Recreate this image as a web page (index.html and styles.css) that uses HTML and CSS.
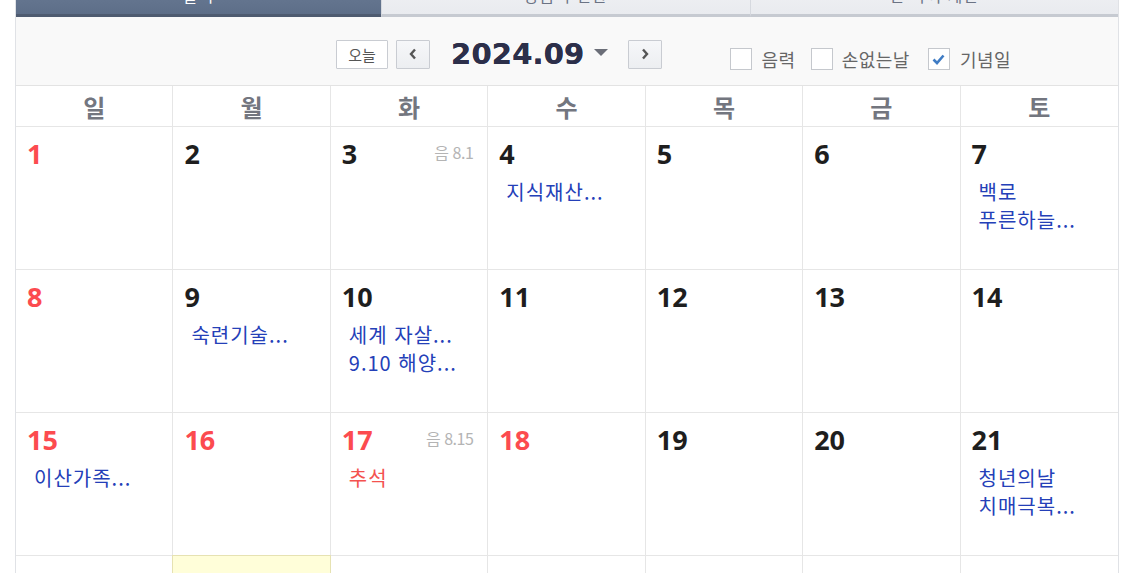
FILE: index.html
```html
<!DOCTYPE html>
<html lang="ko">
<head>
<meta charset="utf-8">
<title>달력</title>
<link rel="stylesheet" href="styles.css">
</head>
<body>
<div class="wrap">
  <div class="tabs">
    <div class="tab active">달력</div>
    <div class="tab">양음력 변환</div>
    <div class="tab">만 나이 계산</div>
  </div>
  <div class="toolbar">
    <div class="nav">
      <button class="btn today">오늘</button>
      <button class="btn arrow"><svg width="8" height="12" viewBox="0 0 8 12"><path d="M6 1.5 L2 6 L6 10.5" fill="none" stroke="#555" stroke-width="2.4"/></svg></button>
      <div class="title">2024.09</div>
      <span class="caret"></span>
      <button class="btn arrow"><svg width="8" height="12" viewBox="0 0 8 12"><path d="M2 1.5 L6 6 L2 10.5" fill="none" stroke="#555" stroke-width="2.4"/></svg></button>
    </div>
    <div class="opts">
      <label class="opt"><span class="box"></span>음력</label>
      <label class="opt"><span class="box"></span>손없는날</label>
      <label class="opt"><span class="box checked"><svg width="13" height="11" viewBox="0 0 13 11"><path d="M1.5 5.5 L5 9 L11.5 1.5" fill="none" stroke="#3f7cc4" stroke-width="2.6"/></svg></span>기념일</label>
    </div>
  </div>
  <div class="grid">
    <div class="head">일</div><div class="head">월</div><div class="head">화</div><div class="head">수</div><div class="head">목</div><div class="head">금</div><div class="head last">토</div>

    <div class="cell"><div class="top"><span class="num sun">1</span></div></div>
    <div class="cell"><div class="top"><span class="num">2</span></div></div>
    <div class="cell"><div class="top"><span class="num">3</span><span class="lunar">음 8.1</span></div></div>
    <div class="cell"><div class="top"><span class="num">4</span></div><div class="ev">지식재산...</div></div>
    <div class="cell"><div class="top"><span class="num">5</span></div></div>
    <div class="cell"><div class="top"><span class="num">6</span></div></div>
    <div class="cell last"><div class="top"><span class="num">7</span></div><div class="ev">백로</div><div class="ev2">푸른하늘...</div></div>

    <div class="cell"><div class="top"><span class="num sun">8</span></div></div>
    <div class="cell"><div class="top"><span class="num">9</span></div><div class="ev">숙련기술...</div></div>
    <div class="cell"><div class="top"><span class="num">10</span></div><div class="ev">세계 자살...</div><div class="ev2">9.10 해양...</div></div>
    <div class="cell"><div class="top"><span class="num">11</span></div></div>
    <div class="cell"><div class="top"><span class="num">12</span></div></div>
    <div class="cell"><div class="top"><span class="num">13</span></div></div>
    <div class="cell last"><div class="top"><span class="num">14</span></div></div>

    <div class="cell"><div class="top"><span class="num sun">15</span></div><div class="ev">이산가족...</div></div>
    <div class="cell"><div class="top"><span class="num sun">16</span></div></div>
    <div class="cell"><div class="top"><span class="num sun">17</span><span class="lunar">음 8.15</span></div><div class="ev holiday">추석</div></div>
    <div class="cell"><div class="top"><span class="num sun">18</span></div></div>
    <div class="cell"><div class="top"><span class="num">19</span></div></div>
    <div class="cell"><div class="top"><span class="num">20</span></div></div>
    <div class="cell last"><div class="top"><span class="num">21</span></div><div class="ev">청년의날</div><div class="ev2">치매극복...</div></div>

    <div class="cell"><div class="top"><span class="num sun">22</span></div></div>
    <div class="cell today-cell"><div class="top"><span class="num">23</span></div></div>
    <div class="cell"><div class="top"><span class="num">24</span></div></div>
    <div class="cell"><div class="top"><span class="num">25</span></div></div>
    <div class="cell"><div class="top"><span class="num">26</span></div></div>
    <div class="cell"><div class="top"><span class="num">27</span></div></div>
    <div class="cell last"><div class="top"><span class="num">28</span></div></div>
  </div>
</div>
</body>
</html>
```

FILE: styles.css
```css
* { box-sizing: border-box; }
html, body { margin: 0; padding: 0; background: #fff; overflow: hidden; }
body { font-family: "Noto Sans CJK KR", "Noto Sans", sans-serif; }

.wrap {
  margin-left: 15px;
  width: 1104px;
  border-left: 1px solid #e0e2e6;
  border-right: 1px solid #e0e2e6;
}

.tabs {
  display: flex;
  margin-top: -20px;
  height: 37px;
}
.tab {
  flex: 1;
  text-align: center;
  font-size: 16px;
  line-height: 30px;
  letter-spacing: 1px;
  color: #6b7384;
  background: linear-gradient(#f1f2f5, #e9ebef);
  border-left: 1px solid #d6d9df;
  border-bottom: 3px solid #c6cad1;
}
.tab.active {
  flex: 0 0 365px;
  color: #fff;
  background: linear-gradient(#6c7d97, #5d6e88);
  border-left: none;
  border-bottom: 3px solid #4e5b70;
}

.toolbar {
  display: flex;
  align-items: flex-start;
  height: 69px;
  background: #f9f9f9;
  border-bottom: 1px solid #e3e3e3;
  padding-left: 320px;
  padding-top: 22px;
}
.nav { display: flex; align-items: center; }
.btn {
  display: flex;
  align-items: center;
  justify-content: center;
  height: 29px;
  border: 1px solid #c9ccd2;
  border-radius: 1px;
  padding: 0;
  margin: 0;
  font-family: "Noto Sans CJK KR", sans-serif;
}
.btn.today {
  width: 52px;
  background: #fff;
  font-size: 15px;
  color: #555;
  margin-right: 8px;
}
.btn.arrow {
  width: 34px;
  background: linear-gradient(#f6f7f9, #eceef1);
}
.title {
  font-family: "DejaVu Sans", sans-serif;
  font-weight: bold;
  font-size: 29px;
  line-height: 30px;
  color: #2c2f4a;
  margin-left: 21px;
  letter-spacing: 0.2px;
  text-shadow: 0 0 0.6px #2c2f4a;
}
.caret {
  width: 0; height: 0;
  border-left: 7px solid transparent;
  border-right: 7px solid transparent;
  border-top: 7px solid #6b6e78;
  margin-left: 9px;
  margin-right: 20px;
  margin-top: -3px;
}

.opts {
  display: flex;
  align-items: center;
  margin-left: 68px;
  margin-top: 9px;
}
.opt {
  display: flex;
  align-items: center;
  font-size: 18px;
  letter-spacing: 0.5px;
  color: #666;
  margin-right: 15px;
  line-height: 22px;
}
.box {
  width: 22px; height: 22px;
  border: 1px solid #c5c8cd;
  background: #fff;
  margin-right: 10px;
  display: flex;
  align-items: center;
  justify-content: center;
}
.opt:nth-child(2) { margin-right: 18px; }
.opt:nth-child(2) .box { margin-right: 9px; }

.grid {
  display: grid;
  grid-template-columns: repeat(7, 1fr);
}
.head {
  height: 41px;
  border-right: 1px solid #e6e6e6;
  border-bottom: 1px solid #e6e6e6;
  text-align: center;
  font-size: 24px;
  font-weight: bold;
  line-height: 42px;
  color: #73767f;
}
.head.last, .cell.last { border-right: none; }

.cell {
  height: 143px;
  border-right: 1px solid #e6e6e6;
  border-bottom: 1px solid #e6e6e6;
  padding: 10px 14px 0 11px;
}
.top {
  display: flex;
  justify-content: space-between;
  align-items: flex-start;
  height: 34px;
}
.num {
  font-family: "Noto Sans", sans-serif;
  font-weight: bold;
  font-size: 27px;
  line-height: 34px;
  color: #1e1e1e;
}
.num.sun { color: #fc4b4f; }
.lunar {
  font-size: 16px;
  line-height: 30px;
  color: #b4b4b4;
  letter-spacing: -0.5px;
}
.ev, .ev2 {
  font-size: 20px;
  letter-spacing: 1px;
  line-height: 28px;
  color: #2440b8;
  margin-left: 7px;
  white-space: nowrap;
}
.ev { margin-top: 7px; }
.ev.holiday { color: #f4524f; }
.today-cell {
  background: #fffed9;
  border-top: 1px solid #e6e2b2;
  border-left: 1px solid #e6e2b2;
  margin-top: -1px;
  margin-left: -1px;
  border-right-color: #e6e2b2;
}
```
